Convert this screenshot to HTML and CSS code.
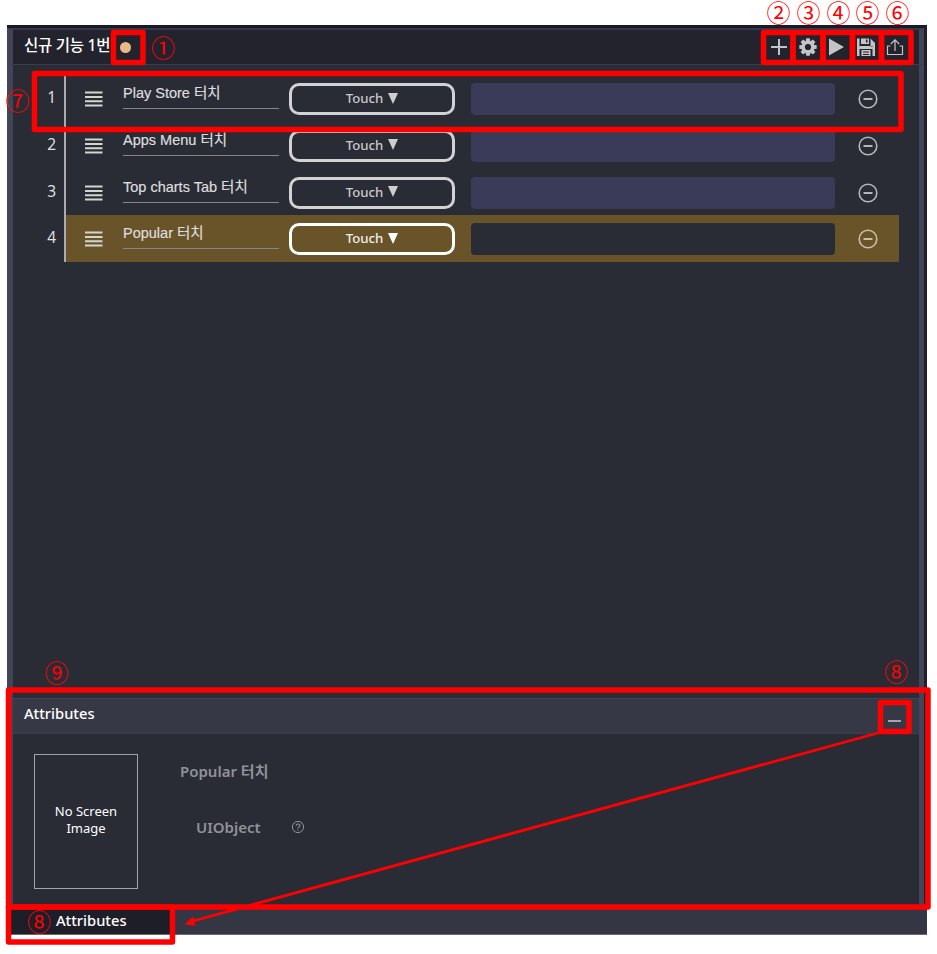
FILE: index.html
```html
<!DOCTYPE html>
<html lang="ko">
<head>
<meta charset="utf-8">
<title>신규 기능 1번</title>
<link rel="stylesheet" href="styles.css">
</head>
<body>
<svg width="0" height="0" class="defs" aria-hidden="true">
  <symbol id="minus" viewBox="0 0 20 20"><circle cx="10" cy="10" r="8.8" fill="none" stroke="currentColor" stroke-width="1.6"/><path d="M5.500 10h9" stroke="currentColor" stroke-width="2"/></symbol>
  <symbol id="bars" viewBox="0 0 18 16"><path d="M0 1.500h17.500M0 5.900h17.500M0 10.200h17.500M0 14.500h17.500" stroke="currentColor" stroke-width="2"/></symbol>
</svg>
<main class="window">
  <header class="titlebar">
    <h1 class="title">신규 기능 1번</h1><span class="dirty"></span>
    <nav class="tools">
      <svg viewBox="0 0 18 18"><path d="M9 1v16M1 9h16" stroke="currentColor" stroke-width="2"/></svg>
      <svg viewBox="0 0 18 18"><g fill="currentColor"><circle cx="9" cy="9" r="6.600"/><path id="t" d="M7.200.3h3.600l.5 4H6.700zM6.700 13.700h4.600l-.5 4H7.200z"/><use href="#t" transform="rotate(45 9 9)"/><use href="#t" transform="rotate(90 9 9)"/><use href="#t" transform="rotate(135 9 9)"/></g><circle cx="9" cy="9" r="3.100" fill="#23232f"/></svg>
      <svg viewBox="0 0 18 18"><path d="M1 .5 16 9 1 17.500z" fill="currentColor"/></svg>
      <svg viewBox="0 0 18 18"><path fill="currentColor" fill-rule="evenodd" d="M0 .5h2.500V9h11V.5L18 5v13h-2.500v-7H2.500v7H0zM4 .5h8v5.500H4zm5 1v3h1.500v-3zM2 8h14v3H2zM4.500 12h9v6h-9zM6 13.500v1h6v-1zm0 2.500v1h6v-1z"/><path d="M0 8.500h18v2.500H0z" fill="currentColor"/></svg>
      <svg viewBox="0 0 18 18"><path d="M4.500 8H1.500v8.500h15V8h-3M9 13V2M4.800 6 9 1.800 13.200 6" fill="none" stroke="currentColor" stroke-width="1.200"/></svg>
    </nav>
  </header>
  <section class="steps">
    <div class="step"><span class="num">1</span><div class="body"><svg class="grip"><use href="#bars"/></svg><span class="name">Play Store 터치</span><span class="action">Touch <i></i></span><span class="field"></span><svg class="remove"><use href="#minus"/></svg></div></div>
    <div class="step"><span class="num">2</span><div class="body"><svg class="grip"><use href="#bars"/></svg><span class="name">Apps Menu 터치</span><span class="action">Touch <i></i></span><span class="field"></span><svg class="remove"><use href="#minus"/></svg></div></div>
    <div class="step"><span class="num">3</span><div class="body"><svg class="grip"><use href="#bars"/></svg><span class="name">Top charts Tab 터치</span><span class="action">Touch <i></i></span><span class="field"></span><svg class="remove"><use href="#minus"/></svg></div></div>
    <div class="step selected"><span class="num">4</span><div class="body"><svg class="grip"><use href="#bars"/></svg><span class="name">Popular 터치</span><span class="action">Touch <i></i></span><span class="field"></span><svg class="remove"><use href="#minus"/></svg></div></div>
  </section>
  <section class="attributes">
    <header class="attr-head"><h2>Attributes</h2><span class="collapse"></span></header>
    <div class="attr-body">
      <div class="thumb">No Screen<br>Image</div>
      <div class="details">
        <div class="attr-name">Popular 터치</div>
        <div class="object"><span>UIObject</span><svg viewBox="0 0 14 14"><circle cx="7" cy="7" r="5.600" fill="none" stroke="currentColor"/><path d="M5.100 5.800c0-2.400 3.800-2.300 3.800-.2C8.900 6.900 7 6.900 7 8.500M7 9.400v1.200" fill="none" stroke="currentColor" stroke-width="1.100"/></svg></div>
      </div>
    </div>
  </section>
  <footer class="dock"><span class="dock-tab">Attributes</span></footer>
</main>
<svg class="notes" viewBox="0 0 937 954">
  <g class="boxes">
    <rect x="113.500" y="32.500" width="29.500" height="30"/>
    <rect x="763.500" y="32.500" width="29.500" height="30"/>
    <rect x="793" y="32.500" width="30" height="30"/>
    <rect x="823" y="32.500" width="29.500" height="30"/>
    <rect x="852.500" y="32.500" width="29" height="30"/>
    <rect x="881.500" y="32.500" width="29.500" height="30"/>
    <rect x="34.500" y="73.500" width="866.500" height="56"/>
    <rect x="8.500" y="690" width="919.500" height="217"/>
    <rect x="880.500" y="702.500" width="28.500" height="29"/>
    <rect x="8.500" y="907" width="164" height="35"/>
  </g>
  <path d="M878 733 193 921" stroke="#f00" stroke-width="2.800"/>
  <path d="M184.500 924.300 193 916.500l2.500 9.500z" fill="#f00"/>
  <g class="marks">
    <text x="163" y="57">①</text>
    <text x="778.500" y="21.500">②</text><text x="808.500" y="21.500">③</text><text x="838.500" y="21.500">④</text><text x="867.500" y="21.500">⑤</text><text x="897.500" y="21.500">⑥</text>
    <text x="17.500" y="109.500">⑦</text>
    <text x="56.500" y="682">⑨</text><text x="896" y="681">⑧</text><text x="39" y="931">⑧</text>
  </g>
</svg>
</body>
</html>
```
FILE: styles.css
```css
* { box-sizing: border-box; }
body { margin: 0; background: #fff; font-family: "Noto Sans", "Noto Sans CJK KR", sans-serif; color: #fff; width: 937px; height: 954px; overflow: hidden; position: relative; }
h1, h2 { margin: 0; font-weight: 500; }
.defs { position: absolute; }
.window { margin: 25px 0 0 7px; width: 920px; height: 910px; background: #292b35; border-top: 3px solid #1a1a24; border-right: 3px solid #20202b; display: flex; flex-direction: column; }
.titlebar, .steps, .attributes { border-left: 6px solid #424558; border-right: 5px solid #424558; }
.titlebar { height: 37px; flex: none; background: #23232e; border-top: 2px solid #36384b; border-bottom: 1px solid #3a3c50; display: flex; align-items: center; padding: 0 15px 0 11px; }
.title { font-size: 15.500px; line-height: 20px; width: 88px; white-space: nowrap; letter-spacing: -.25px; margin-top: -5px; }
.dirty { width: 11px; height: 11px; border-radius: 50%; background: #ebb985; margin-left: 8px; }
.tools { display: flex; gap: 11px; margin-left: auto; color: #c4c4c8; }
.tools svg { width: 18px; height: 18px; }
.steps { flex: none; height: 633px; padding-top: 10px; }
.step { height: 46.8px; display: flex; }
.num { width: 51px; padding: 11px 8px 0 0; text-align: right; font-size: 15.500px; line-height: 22px; color: #dedee0; }
.body { width: 835px; border-left: 2px solid #aaaab0; display: flex; align-items: flex-start; color: #c8c8cb; }
.selected .body { background: #695329; }
.grip { width: 18px; height: 16px; margin: 16px 20px 0 19px; color: #d3d5d0; }
.name { width: 156px; height: 34px; border-bottom: 1px solid #85858c; font: 14.500px/20px "Liberation Sans", "Noto Sans CJK KR", sans-serif; color: #dddddf; padding-top: 8px; white-space: nowrap; -webkit-text-stroke: .2px #dddddf; }
.action { width: 166px; height: 32px; margin: 8px 0 0 10px; border: 3px solid #d2d2d4; border-radius: 10px; display: flex; justify-content: center; align-items: center; gap: 5px; font-size: 13.200px; font-weight: 500; color: #c9c9cc; padding-bottom: 2px; }
.action i { border: 5.500px solid transparent; border-top: 11px solid #cecece; border-bottom: 0; }
.selected .action { border-color: #fff; color: #eee; }
.selected .action i { border-top-color: #fff; }
.field { width: 364px; height: 32px; margin: 8px 0 0 16px; border-radius: 4px; background: #393b59; }
.selected .field { background: #292b35; }
.remove { width: 20px; height: 20px; margin: 14px 0 0 23px; color: #b6b6ba; }
.selected .remove { color: #cbbda0; }
.attributes { height: 209px; flex: none; }
.attr-head { height: 36px; background: #363846; border-top: 1px solid #424558; border-bottom: 1px solid #3c3e50; display: flex; padding: 0 18px 0 11px; }
.attr-head h2 { font-size: 14.700px; line-height: 28px; }
.collapse { width: 13px; height: 2px; background: #a5a6ad; margin: 21px 0 0 auto; }
.attr-body { display: flex; padding: 20px 0 0 21px; }
.thumb { width: 104px; height: 135px; border: 1px solid #a2a2a7; display: flex; align-items: center; justify-content: center; text-align: center; font-size: 13px; line-height: 17px; padding-bottom: 3px; }
.details { padding: 6px 0 0 42px; color: #919198; font-size: 15px; font-weight: 600; line-height: 22px; }
.object { display: flex; align-items: center; margin: 34px 0 0 16px; }
.object svg { width: 14px; height: 14px; margin-left: 30px; }
.dock { height: 28px; flex: none; background: #343644; border-bottom: 1px solid #67687a; margin-right: -3px; }
.dock-tab { display: block; width: 163px; height: 27px; background: #1e1e28; padding-left: 49px; font-size: 14.700px; font-weight: 500; line-height: 27px; }
.notes { position: absolute; left: 0; top: 0; width: 937px; height: 954px; }
.boxes rect { fill: none; stroke: #f00; stroke-width: 5.500; stroke-linejoin: round; }
.marks { font: 400 24px "Noto Sans CJK KR", sans-serif; fill: #f00; text-anchor: middle; }
```
